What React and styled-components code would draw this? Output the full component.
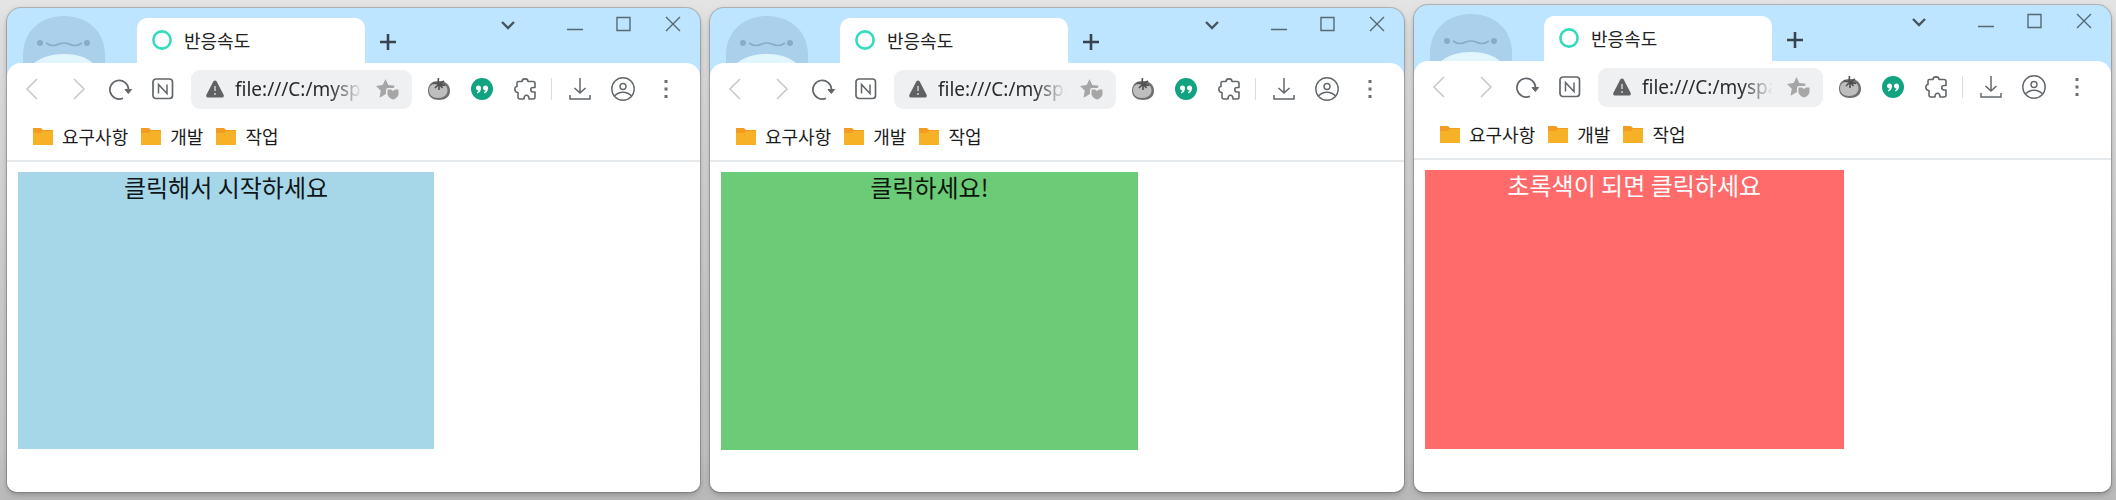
import React from "react";
import styled, { createGlobalStyle } from "styled-components";

const GlobalStyle = createGlobalStyle`
  *, *::before, *::after { box-sizing: border-box; }
  body {
    margin: 0;
    background: #c8c8c8;
    font-family: "Noto Sans CJK KR", "Noto Sans", sans-serif;
    color: #1b1b1b;
  }
  svg { display: block; }
`;

const Desktop = styled.main`
  display: grid;
  grid-template-columns: 693fr 694fr 697fr;
  gap: 10px;
  min-height: 100vh;
  padding: 5px 5px 8px 7px;
  background: linear-gradient(#e4e4e4 0, #dadada 20%, #cbcbcb 60%, #c6c6c6 90%, #bababa 100%);
`;

const Window = styled.section`
  display: flex;
  flex-direction: column;
  min-width: 0;
  margin-top: ${(p) => (p.$raised ? 0 : 3)}px;
  border-radius: 14px 14px 10px 10px;
  background: #bde5ff;
  box-shadow: 0 0 0 1px rgba(90, 90, 90, 0.32), 0 2px 4px rgba(0, 0, 0, 0.2),
    0 4px 12px rgba(0, 0, 0, 0.1);
  overflow: hidden;
`;

const TabStrip = styled.header`
  display: flex;
  align-items: flex-end;
  height: ${(p) => (p.$raised ? 56 : 55)}px;
  padding: 0 3px 0 16px;
`;

const Avatar = styled.svg`
  flex: none;
  width: 82px;
  height: 47px;
  margin-right: 32px;
`;

const Tab = styled.button`
  display: flex;
  align-items: center;
  gap: 12px;
  flex: 0 1 228px;
  height: 45px;
  padding: 0 15px 2px;
  border: 0;
  border-radius: 10px 10px 0 0;
  background: #fff;
  color: #222;
  font: inherit;
  font-size: 18px;
  line-height: 24px;
  white-space: nowrap;
`;

const IconButton = styled.button`
  display: flex;
  align-items: center;
  justify-content: center;
  flex: none;
  width: ${(p) => p.$w || 43}px;
  height: ${(p) => p.$h || 32}px;
  padding: 0;
  border: 0;
  background: transparent;
  color: ${(p) => p.$tone || "#62676b"};
`;

const NewTab = styled(IconButton)`
  margin: 0 auto 5px 3px;
`;

const WindowControls = styled.div`
  display: flex;
  align-self: flex-start;
`;

const TabSearch = styled(IconButton)`
  margin-right: 18px;
`;

const Toolbar = styled.div`
  display: flex;
  align-items: center;
  height: 52px;
  padding: 0 13px 0 4px;
  border-radius: 14px 14px 0 0;
  background: #fff;
`;

const History = styled.div`
  display: flex;
  gap: 5px;
`;

const Address = styled.label`
  display: flex;
  align-items: center;
  flex: 1;
  min-width: 0;
  height: 39px;
  margin: 0 5px 0 7px;
  padding: 0 13px 0 15px;
  border-radius: 9px;
  background: #eff0f2;
`;

const Url = styled.input`
  flex: 1;
  min-width: 0;
  margin: 0 14px 0 11px;
  padding: 0;
  border: 0;
  outline: 0;
  background: transparent;
  color: #2b2b2b;
  font-family: "Noto Sans", sans-serif;
  font-size: 19px;
  line-height: 26px;
  mask-image: linear-gradient(to right, #000 calc(100% - 32px), transparent);
`;

const Divider = styled.span`
  width: 1px;
  height: 22px;
  margin: 0 6px 0 5px;
  background: #d9dce0;
`;

const Bookmarks = styled.nav`
  display: flex;
  align-items: center;
  gap: 13px;
  height: 47px;
  padding: 0 26px 3px;
  border-bottom: 2px solid #e6e9eb;
  background: #fff;
`;

const Bookmark = styled.a`
  display: flex;
  align-items: center;
  gap: 9px;
  color: #1b1b1b;
  font-size: 18px;
  line-height: 24px;
  text-decoration: none;
  white-space: nowrap;
`;

const Page = styled.div`
  flex: 1;
  padding: 10px 11px 42px;
  background: #fff;
`;

const ReactionBox = styled.button`
  display: flex;
  justify-content: center;
  width: 62%;
  aspect-ratio: 3 / 2;
  padding: 0;
  border: 0;
  background: ${(p) => p.$bg};
  color: ${(p) => p.$fg};
  font: inherit;
  font-size: 24px;
  line-height: 29px;
  white-space: nowrap;
`;

function Stroke({ w = 24, h = 24, sw = 2, children }) {
  return (
    <svg width={w} height={h} viewBox={`0 0 ${w} ${h}`} fill="none" stroke="currentColor" strokeWidth={sw} aria-hidden="true">
      {children}
    </svg>
  );
}

const WhaleAvatar = () => (
  <Avatar viewBox="0 0 82 47" aria-hidden="true">
    <path d="M0 47V39C0 16 17 0 41 0s41 16 41 39v8z" fill="#abd0eb" />
    <path d="M11 47c8-6 18-9 30-9s22 3 29 9z" fill="#e0f6fc" />
    <circle cx="17" cy="27" r="3" fill="#88abc9" />
    <circle cx="64" cy="27" r="3" fill="#88abc9" />
    <path d="M23 27c4 3 9 3 13 1q5-2 10 0c4 2 9 2 13-1" fill="none" stroke="#88abc9" strokeWidth="1.6" />
  </Avatar>
);

const Folder = () => (
  <svg width="20" height="17" viewBox="0 0 20 17" aria-hidden="true">
    <path d="M0 0h8l2 2h10v15H0z" fill="#f39c23" />
    <path d="M0 5h8l2-2h10v14H0z" fill="#f6b127" />
  </svg>
);

const Tomato = () => (
  <svg width="24" height="24" viewBox="0 0 24 24" aria-hidden="true">
    <path d="M1 14C1 7 5 4 12 4s11 4 11 10c0 6-5 9-11 9S1 20 1 14z" fill="#6f6f6f" />
    <path d="M2 13.500C2 9 5 6.500 11 6.500s9.500 2.500 9.500 7-4 7.500-9.500 7.500-9-3-9-7.500z" fill="#bebebe" />
    <path d="M6 6l5 .8L11.500 1M17 4l-5 3 6 1.500M12 7l-4 4M12 7v6M12 7l3.500 4" fill="none" stroke="#505050" strokeWidth="1.600" />
  </svg>
);

const Quote = () => (
  <svg width="22" height="22" viewBox="0 0 22 22" aria-hidden="true">
    <circle cx="11" cy="11" r="11" fill="#12a381" />
    <path d="M5 10a2.500 2.500 0 0 1 5 0c0 3-1.500 5-4 5.500V14c1-.4 1.500-1 1.500-1.600C6 12.400 5 11.400 5 10zM12 10a2.500 2.500 0 0 1 5 0c0 3-1.500 5-4 5.500V14c1-.4 1.500-1 1.500-1.600C13 12.400 12 11.400 12 10z" fill="#fff" />
  </svg>
);

const Warning = () => (
  <svg width="18" height="18" viewBox="0 0 18 18" aria-hidden="true">
    <path d="M7.300 1.500Q9-.5 10.700 1.500L17.700 15Q18.300 17.500 16 17.500H2Q-.3 17.500.3 15z" fill="#606162" />
    <path d="M9 6v5M9 13v2" stroke="#c9cacb" strokeWidth="1.600" />
  </svg>
);

const StarShield = () => (
  <svg width="23" height="21" viewBox="0 0 23 21" fill="#a6a6a6" aria-hidden="true">
    <path d="M9.500 0l2.800 6 6.500.8-1 2.200H12q-2 0-2 2v4l-6.500 3.800 1.300-7L0 7l6.700-1z" />
    <path d="M11.500 10.500H15l2 1.500 2-1.500h3.500v4q0 4-5.500 6-5.500-2-5.500-6z" />
  </svg>
);

function BrowserWindow({ raised, message, bg, fg }) {
  return (
    <Window $raised={raised}>
      <TabStrip $raised={raised}>
        <WhaleAvatar />
        <Tab type="button">
          <svg width="20" height="20" viewBox="0 0 20 20" aria-hidden="true">
            <circle cx="10" cy="10" r="8.600" fill="none" stroke="#36dabd" strokeWidth="2.600" />
          </svg>
          반응속도
        </Tab>
        <NewTab type="button" aria-label="새 탭" $w={40} $tone="#37444d">
          <Stroke w={18} h={18} sw={2.6}><path d="M9 1v16M1 9h16" /></Stroke>
        </NewTab>
        <WindowControls>
          <TabSearch type="button" aria-label="탭 검색" $w={49} $tone="#47555f">
            <Stroke w={16} h={12} sw={2.4}><path d="M2 4l6 6 6-6" /></Stroke>
          </TabSearch>
          <IconButton type="button" aria-label="최소화" $w={49} $tone="#566975">
            <Stroke w={16} h={16} sw={1.4}><path d="M0 13.500h16" /></Stroke>
          </IconButton>
          <IconButton type="button" aria-label="최대화" $w={49} $tone="#566975">
            <Stroke w={16} h={16} sw={1.4}><path d="M1 1.500h13v13H1z" /></Stroke>
          </IconButton>
          <IconButton type="button" aria-label="닫기" $w={49} $tone="#566975">
            <Stroke w={16} h={16} sw={1.4}><path d="M1 1l14 14M15 1L1 15" /></Stroke>
          </IconButton>
        </WindowControls>
      </TabStrip>

      <Toolbar>
        <History>
          <IconButton type="button" aria-label="뒤로" $w={42} $tone="#c6c8ca">
            <Stroke w={14} h={22} sw={1.6}><path d="M12 1L2 11l10 10" /></Stroke>
          </IconButton>
          <IconButton type="button" aria-label="앞으로" $w={42} $tone="#c6c8ca">
            <Stroke w={14} h={22} sw={1.6}><path d="M2 1l10 10L2 21" /></Stroke>
          </IconButton>
        </History>
        <IconButton type="button" aria-label="새로고침" $w={42}>
          <Stroke w={24} h={22} sw={1.7}>
            <path d="M14 20.200A9.300 9.300 0 1 1 19.500 11.500" />
            <path d="M16 11.500h6.600l-3.300 4z" fill="currentColor" strokeWidth="1" />
          </Stroke>
        </IconButton>
        <IconButton type="button" aria-label="네이버" $w={42}>
          <Stroke w={22} h={22} sw={1.7}>
            <rect x="1" y="1" width="19.500" height="19.500" rx="3" />
            <path d="M6.500 15.500V6.500l8.500 9V6.500" strokeWidth="1.500" />
          </Stroke>
        </IconButton>
        <Address>
          <Warning />
          <Url aria-label="주소" defaultValue="file:///C:/myspace" />
          <StarShield />
        </Address>
        <IconButton type="button" aria-label="토마토"><Tomato /></IconButton>
        <IconButton type="button" aria-label="인용"><Quote /></IconButton>
        <IconButton type="button" aria-label="확장 프로그램">
          <Stroke w={22} h={22} sw={1.6}>
            <path d="M4.500 3.500H8c0-3.500 6-3.500 6 0h5q2 0 2 2v4h-2c-3 0-3 4.500 0 4.500h2v5q0 2-2 2h-4c0-5-5-5-5 0H6q-2 0-2-2v-4.500C0 14.500 0 8.500 3 8.500V5q0-1.500 1.500-1.500z" strokeLinejoin="round" />
          </Stroke>
        </IconButton>
        <Divider />
        <IconButton type="button" aria-label="다운로드">
          <Stroke w={22} h={22} sw={1.5}><path d="M11 0v15M5.500 10l5.500 5 5.500-5M1 17v4h20v-4" /></Stroke>
        </IconButton>
        <IconButton type="button" aria-label="프로필">
          <Stroke w={24} h={24} sw={1.4}>
            <circle cx="12" cy="12" r="11.200" />
            <circle cx="12" cy="9.500" r="3" />
            <path d="M3.500 19c4.500-5 12.500-5 17 0" />
          </Stroke>
        </IconButton>
        <IconButton type="button" aria-label="메뉴">
          <svg width="4" height="18" viewBox="0 0 4 18" fill="#6a6f73" aria-hidden="true">
            <rect x=".5" y="0" width="3" height="3" />
            <rect x=".5" y="7.500" width="3" height="3" />
            <rect x=".5" y="15" width="3" height="3" />
          </svg>
        </IconButton>
      </Toolbar>

      <Bookmarks aria-label="북마크">
        {["요구사항", "개발", "작업"].map((name) => (
          <Bookmark href="#" key={name}><Folder />{name}</Bookmark>
        ))}
      </Bookmarks>

      <Page>
        <ReactionBox type="button" $bg={bg} $fg={fg}>{message}</ReactionBox>
      </Page>
    </Window>
  );
}

export default function App() {
  return (
    <>
      <GlobalStyle />
      <Desktop>
        <BrowserWindow message="클릭해서 시작하세요" bg="#a6d7e8" fg="#101618" />
        <BrowserWindow message="클릭하세요!" bg="#6ccb77" fg="#0c160d" />
        <BrowserWindow raised message="초록색이 되면 클릭하세요" bg="#ff6b6b" fg="#fff" />
      </Desktop>
    </>
  );
}
